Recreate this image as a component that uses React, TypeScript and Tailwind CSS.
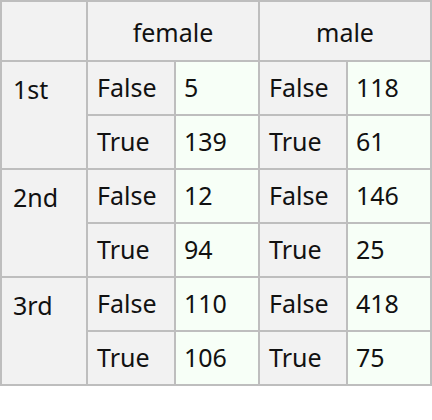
import React from "react";

interface Pair {
    label: string;
    value: number;
}

interface ClassRow {
    name: string;
    female: Pair[];
    male: Pair[];
}

const rows: ClassRow[] = [
    { name: "1st", female: [{ label: "False", value: 5 }, { label: "True", value: 139 }], male: [{ label: "False", value: 118 }, { label: "True", value: 61 }] },
    { name: "2nd", female: [{ label: "False", value: 12 }, { label: "True", value: 94 }], male: [{ label: "False", value: 146 }, { label: "True", value: 25 }] },
    { name: "3rd", female: [{ label: "False", value: 110 }, { label: "True", value: 106 }], male: [{ label: "False", value: 418 }, { label: "True", value: 75 }] },
];

const keyCell = "bg-[#f2f2f2] flex items-center pl-[9px]";
const valCell = "bg-[#f7fff7] flex items-center pl-[8px]";

export default function App() {
    return (
        <div className="w-[432px] h-[420px] bg-white" style={{ fontFamily: '"Noto Sans", "Lato", sans-serif' }}>
            <div className="grid grid-cols-[84px_86px_82px_86px_82px] grid-rows-[58px_repeat(6,52px)] gap-[2px] p-[2px] bg-[#bebebe] w-[432px] text-[25px] text-[#111]">
                <div className="bg-[#f2f2f2]"></div>
                <div className="col-span-2 bg-[#f2f2f2] flex items-center justify-center pt-[4px]">female</div>
                <div className="col-span-2 bg-[#f2f2f2] flex items-center justify-center pt-[4px]">male</div>
                {rows.map((r) => (
                    <React.Fragment key={r.name}>
                        <div className="row-span-2 bg-[#f2f2f2] pl-[11px] pt-[9px]">{r.name}</div>
                        {[0, 1].map((i) => (
                            <React.Fragment key={i}>
                                <div className={keyCell}>{r.female[i].label}</div>
                                <div className={valCell}>{r.female[i].value}</div>
                                <div className={keyCell}>{r.male[i].label}</div>
                                <div className={valCell}>{r.male[i].value}</div>
                            </React.Fragment>
                        ))}
                    </React.Fragment>
                ))}
            </div>
        </div>
    );
}
